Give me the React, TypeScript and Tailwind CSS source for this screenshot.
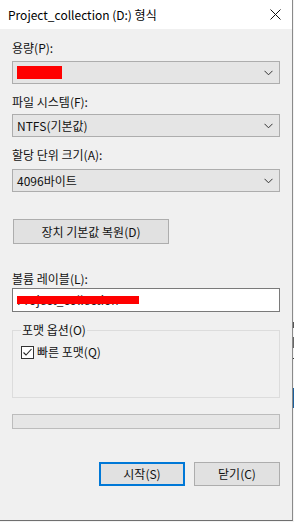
import React from "react";

const font = { fontFamily: '"Noto Sans CJK KR", "Noto Sans", sans-serif' };

function Chevron() {
  return (
    <svg width="9" height="6" viewBox="0 0 9 6" className="shrink-0">
      <polyline points="0.5,0.8 4.5,4.8 8.5,0.8" fill="none" stroke="#333" strokeWidth="1" />
    </svg>
  );
}

function Combo({ children }: { children?: React.ReactNode }) {
  return (
    <div className="w-[268px] h-[23px] bg-[#e5e5e5] border border-[#adadad] flex items-center pl-[4px] pr-[6px]">
      <div className="flex-1 flex items-center text-[12px] leading-[16px] text-[#111]">{children}</div>
      <Chevron />
    </div>
  );
}

function Label({ children, className }: { children: React.ReactNode; className?: string }) {
  return <div className={"text-[12px] leading-[16px] text-[#111] " + (className || "")}>{children}</div>;
}

export default function App() {
  return (
    <div className="w-[294px] h-[522px] flex bg-[#f3f3f3] overflow-hidden" style={font}>
      <div className="w-[293px] h-[521px] flex flex-col bg-[#f0f0f0] border-r border-b border-r-[#8a8a8a] border-b-[#6f6f6f] shrink-0">
        <div className="h-[29px] bg-white flex items-center pl-[8px] pr-[11px] shrink-0">
          <div className="flex-1 text-[12px] leading-[16px] text-black">Project_collection (D:) 형식</div>
          <svg width="11" height="11" viewBox="0 0 11 11">
            <line x1="0.5" y1="0.5" x2="10.5" y2="10.5" stroke="#111" strokeWidth="1" />
            <line x1="10.5" y1="0.5" x2="0.5" y2="10.5" stroke="#111" strokeWidth="1" />
          </svg>
        </div>
        <div className="flex flex-col pl-[12px]">
          <Label className="mt-[11px] mb-[5px]">용량(P):</Label>
          <Combo>
            <div className="w-[45px] h-[13px] bg-[#ff0000]" />
          </Combo>
          <Label className="mt-[10px] mb-[4px]">파일 시스템(F):</Label>
          <Combo>NTFS(기본값)</Combo>
          <Label className="mt-[10px] mb-[6px]">할당 단위 크기(A):</Label>
          <Combo>4096바이트</Combo>
          <div className="mt-[27px] ml-[1px] w-[156px] h-[25px] bg-[#e1e1e1] border border-[#adadad] flex items-center justify-center text-[12px] leading-[16px] text-[#111]">
            장치 기본값 복원(D)
          </div>
          <Label className="mt-[27px] mb-[1px]">볼륨 레이블(L):</Label>
          <div className="w-[268px] h-[24px] bg-white border border-[#7a7a7a] flex items-center pl-[4px] relative">
            <span className="text-[12px] leading-[16px] text-[#222]">Project_collection</span>
            <div className="absolute left-[4px] top-[7px] w-[122px] h-[8px] bg-[#ff0000]" />
          </div>
          <div className="mt-[18px] w-[268px] h-[68px] border border-[#dcdcdc] flex flex-col pl-[8px]">
            <div className="-mt-[9px] self-start bg-[#f0f0f0] px-[1px] text-[12px] leading-[16px] text-[#111]">포맷 옵션(O)</div>
            <div className="mt-[6px] flex items-center gap-[3px]">
              <div className="w-[13px] h-[13px] bg-white border border-[#333] flex items-center justify-center">
                <svg width="11" height="11" viewBox="0 0 11 11">
                  <polyline points="1.5,5.5 4,8 9.5,2" fill="none" stroke="#222" strokeWidth="1.1" />
                </svg>
              </div>
              <span className="text-[12px] leading-[16px] text-[#111]">빠른 포맷(Q)</span>
            </div>
          </div>
          <div className="mt-[16px] w-[268px] h-[15px] bg-[#e6e6e6] border border-[#bcbcbc]" />
          <div className="mt-[33px] w-[268px] flex justify-end gap-[9px]">
            <div className="w-[86px] h-[24px] bg-[#e1e1e1] border-2 border-[#0078d7] flex items-center justify-center text-[12px] leading-[16px] text-[#111]">
              시작(S)
            </div>
            <div className="w-[86px] h-[24px] bg-[#e1e1e1] border border-[#adadad] flex items-center justify-center text-[12px] leading-[16px] text-[#111]">
              닫기(C)
            </div>
          </div>
        </div>
      </div>
      <div className="w-[1px] flex flex-col">
        <div className="h-[322px]" />
        <div className="h-[6px] bg-[#555]" />
        <div className="h-[9px]" />
        <div className="h-[11px] bg-[#666]" />
        <div className="h-[10px]" />
        <div className="h-[1px] bg-[#333]" />
        <div className="h-[29px]" />
        <div className="h-[20px] bg-[#1b5f9c]" />
      </div>
    </div>
  );
}
